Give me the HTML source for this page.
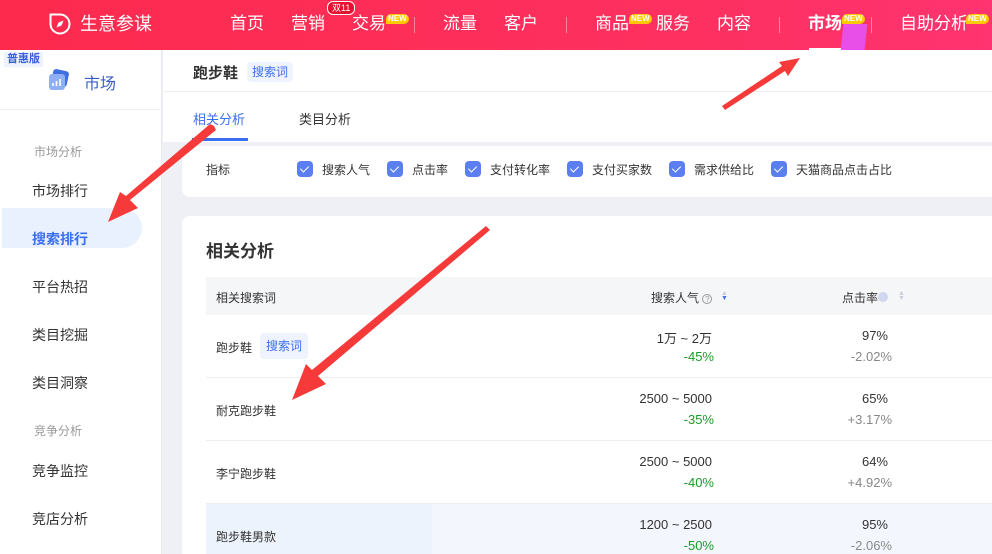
<!DOCTYPE html>
<html><head><meta charset="utf-8"><style>
*{margin:0;padding:0;box-sizing:border-box}
html{width:992px;height:554px;overflow:hidden}
body{width:992px;height:554px;overflow:hidden;background:#eef0f5;font-family:"Liberation Sans","Noto Sans CJK SC",sans-serif;position:relative;color:#333}
.hdr{position:absolute;left:0;top:0;width:992px;height:50px;background:linear-gradient(90deg,#fd2a4d,#fd3060 70%,#ff3470)}
.hdr span{position:absolute;top:13px;color:#fff;font-size:17px;line-height:22px}
.new{position:absolute;background:#ffc800;color:#fff;font-size:8px;font-weight:bold;border-radius:5px 5px 5px 0;padding:0 2px;line-height:10px;top:14px}
.sep{position:absolute;top:17px;width:1px;height:16px;background:rgba(255,255,255,.4)}
.side{position:absolute;left:0;top:50px;width:162px;height:504px;background:#fff;border-right:1px solid #e8e8ec}
.side .it{position:absolute;left:32px;font-size:14px;color:#333}
.side .grp{position:absolute;left:34px;font-size:12px;color:#999}
.top{position:absolute;left:163px;top:50px;width:829px;height:92px;background:#fff}
.card{position:absolute;background:#fff;border-radius:8px}
.cb{position:absolute;top:161px;width:16px;height:16px;background:#5b7ff0;border-radius:4px}
.cb:after{content:"";position:absolute;left:5px;top:3px;width:4px;height:7px;border:solid #fff;border-width:0 1.5px 1.5px 0;transform:rotate(45deg)}
.f{position:absolute;top:161px;font-size:12px;color:#333}
.row{position:absolute;left:206px;width:786px;border-bottom:1px solid #eceef2;height:63px}
.t{position:absolute;font-size:12px;color:#333}
.n{font-size:13px}
.g{color:#1a9a2a}.gr{color:#888}
.r{text-align:right}
</style></head><body>
<div class="hdr">
 <svg style="position:absolute;left:49px;top:13px" width="22" height="22" viewBox="0 0 22 22"><path d="M11 1.5a9.5 9.5 0 1 1-9.5 9.5V1.5z" fill="none" stroke="#fff" stroke-width="2"/><path d="M14.5 7.5l-2 5-5 2 2-5z" fill="#fff"/></svg>
 <span style="left:80px;font-size:18px">生意参谋</span>
 <span style="left:230px">首页</span>
 <span style="left:291px">营销</span>
 <div style="position:absolute;left:327px;top:1px;border:1.5px solid #fff;border-radius:6px;color:#fff;font-size:9px;padding:0 4px;line-height:12px;background:#e8102f">双11</div>
 <span style="left:352px">交易</span><div class="new" style="left:386px">NEW</div>
 <div class="sep" style="left:414px"></div>
 <span style="left:443px">流量</span>
 <span style="left:504px">客户</span>
 <div class="sep" style="left:566px"></div>
 <span style="left:595px">商品</span><div class="new" style="left:629px">NEW</div>
 <span style="left:656px">服务</span>
 <span style="left:717px">内容</span>
 <div class="sep" style="left:779px"></div>
 <span style="left:808px;font-weight:bold">市场</span><div class="new" style="left:842px">NEW</div>
 <div style="position:absolute;left:842px;top:24px;width:24px;height:26px;background:#e84ee8;transform:skewX(-6deg)"></div>
 <div style="position:absolute;left:809px;top:48px;width:32px;height:2px;background:#fff"></div>
 <div class="sep" style="left:871px"></div>
 <span style="left:900px">自助分析</span><div class="new" style="left:966px">NEW</div>
</div>
<div class="side">
 <div style="position:absolute;left:4px;top:2px;background:#eef2fd;color:#3a5ee0;font-size:11px;font-weight:bold;padding:0 3px;line-height:15px">普惠版</div>
 <svg style="position:absolute;left:48px;top:19px" width="22" height="22" viewBox="0 0 22 22"><rect x="4" y="1" width="16" height="16" rx="3" fill="#3f6fe0" transform="rotate(12 12 9)"/><rect x="1" y="5" width="16" height="16" rx="3" fill="#8fb0f5"/><path d="M5 17v-3M8.5 17v-5M12 17v-7" stroke="#fff" stroke-width="1.6"/></svg>
 <div style="position:absolute;left:84px;top:20px;font-size:16px;color:#3a5ec8">市场</div>
 <div style="position:absolute;left:0;top:59px;width:162px;height:1px;background:#eceef2"></div>
 <div class="grp" style="top:93px">市场分析</div>
 <div class="it" style="top:131px">市场排行</div>
 <div style="position:absolute;left:2px;top:158px;width:140px;height:40px;background:#eaf1fe;border-radius:0 20px 20px 0"></div>
 <div class="it" style="top:179px;color:#3a6ef0;font-weight:bold">搜索排行</div>
 <div class="it" style="top:227px">平台热招</div>
 <div class="it" style="top:275px">类目挖掘</div>
 <div class="it" style="top:323px">类目洞察</div>
 <div class="grp" style="top:372px">竞争分析</div>
 <div class="it" style="top:411px">竞争监控</div>
 <div class="it" style="top:459px">竞店分析</div>
</div>
<div class="top">
 <div style="position:absolute;left:30px;top:12px;font-size:15px;font-weight:bold;color:#333">跑步鞋</div>
 <div style="position:absolute;left:84px;top:12px;background:#eef3fd;color:#3a6ef0;font-size:12px;padding:0 5px;line-height:20px;border-radius:4px">搜索词</div>
 <div style="position:absolute;left:0;top:41px;width:829px;height:1px;background:#eceef2"></div>
 <div style="position:absolute;left:30px;top:59px;font-size:13px;color:#3a6ef0">相关分析</div>
 <div style="position:absolute;left:29px;top:88px;width:56px;height:3px;background:#3a6ef0"></div>
 <div style="position:absolute;left:136px;top:59px;font-size:13px;color:#333">类目分析</div>
</div>
<div class="card" style="left:182px;top:146px;width:820px;height:51px"></div>
<div class="f" style="left:206px">指标</div>
<div class="cb" style="left:297px"></div><div class="f" style="left:322px">搜索人气</div>
<div class="cb" style="left:387px"></div><div class="f" style="left:412px">点击率</div>
<div class="cb" style="left:465px"></div><div class="f" style="left:490px">支付转化率</div>
<div class="cb" style="left:567px"></div><div class="f" style="left:592px">支付买家数</div>
<div class="cb" style="left:669px"></div><div class="f" style="left:694px">需求供给比</div>
<div class="cb" style="left:771px"></div><div class="f" style="left:796px">天猫商品点击占比</div>
<div class="card" style="left:182px;top:216px;width:820px;height:350px"></div>
<div style="position:absolute;left:206px;top:237px;font-size:17px;font-weight:bold;color:#333">相关分析</div>
<div style="position:absolute;left:206px;top:277px;width:786px;height:38px;background:#f5f6f8"></div>
<div class="t" style="left:216px;top:289px">相关搜索词</div>
<div class="t" style="left:651px;top:289px">搜索人气 <span style="display:inline-block;width:10px;height:10px;border:1px solid #999;border-radius:50%;font-size:8px;line-height:9px;text-align:center;color:#999">?</span></div>
<div style="position:absolute;left:721px;top:291px;font-size:7px;line-height:5px;color:#c8cde0">▲<br><span style="color:#4a6ef0">▼</span></div>
<div class="t" style="left:842px;top:289px">点击率<span style="display:inline-block;width:10px;height:10px;background:#cfd8ee;border-radius:50%"></span></div>
<div style="position:absolute;left:898px;top:291px;font-size:7px;line-height:5px;color:#c8cde0">▲<br>▼</div>
<div class="row" style="top:315px"></div>
<div class="row" style="top:378px"></div>
<div class="row" style="top:441px"></div>
<div style="position:absolute;left:206px;top:504px;width:226px;height:50px;background:#edf3fc"></div>
<div style="position:absolute;left:432px;top:504px;width:560px;height:50px;background:#f3f7fd"></div>
<div class="t" style="left:216px;top:339px">跑步鞋</div>
<div style="position:absolute;left:260px;top:333px;background:#eef3fd;color:#3a6ef0;font-size:12px;padding:0 6px;line-height:26px;border-radius:4px">搜索词</div>
<div class="t" style="left:216px;top:402px">耐克跑步鞋</div>
<div class="t" style="left:216px;top:465px">李宁跑步鞋</div>
<div class="t" style="left:216px;top:528px">跑步鞋男款</div>
<div class="t r n" style="left:600px;width:112px;top:328px">1万 ~ 2万</div>
<div class="t r g n" style="left:600px;width:114px;top:349px">-45%</div>
<div class="t r n" style="left:600px;width:112px;top:391px">2500 ~ 5000</div>
<div class="t r g n" style="left:600px;width:114px;top:412px">-35%</div>
<div class="t r n" style="left:600px;width:112px;top:454px">2500 ~ 5000</div>
<div class="t r g n" style="left:600px;width:114px;top:475px">-40%</div>
<div class="t r n" style="left:600px;width:112px;top:517px">1200 ~ 2500</div>
<div class="t r g n" style="left:600px;width:114px;top:538px">-50%</div>
<div class="t r n" style="left:800px;width:88px;top:328px">97%</div>
<div class="t r gr n" style="left:800px;width:92px;top:349px">-2.02%</div>
<div class="t r n" style="left:800px;width:88px;top:391px">65%</div>
<div class="t r gr n" style="left:800px;width:92px;top:412px">+3.17%</div>
<div class="t r n" style="left:800px;width:88px;top:454px">64%</div>
<div class="t r gr n" style="left:800px;width:92px;top:475px">+4.92%</div>
<div class="t r n" style="left:800px;width:88px;top:517px">95%</div>
<div class="t r gr n" style="left:800px;width:92px;top:538px">-2.06%</div>
<svg style="position:absolute;left:0;top:0" width="992" height="554">
 <g fill="#f63a3a">
  <polygon points="722,106 782,66 779,62 800,58 788,76 785,71 725,110"/>
  <polygon points="214,126 216,130 130,200 138,208 108,222 120,192 126,196 210,124"/>
  <polygon points="486,226 490,230 318,376 326,384 292,400 306,364 312,370"/>
 </g>
</svg>
</body></html>
